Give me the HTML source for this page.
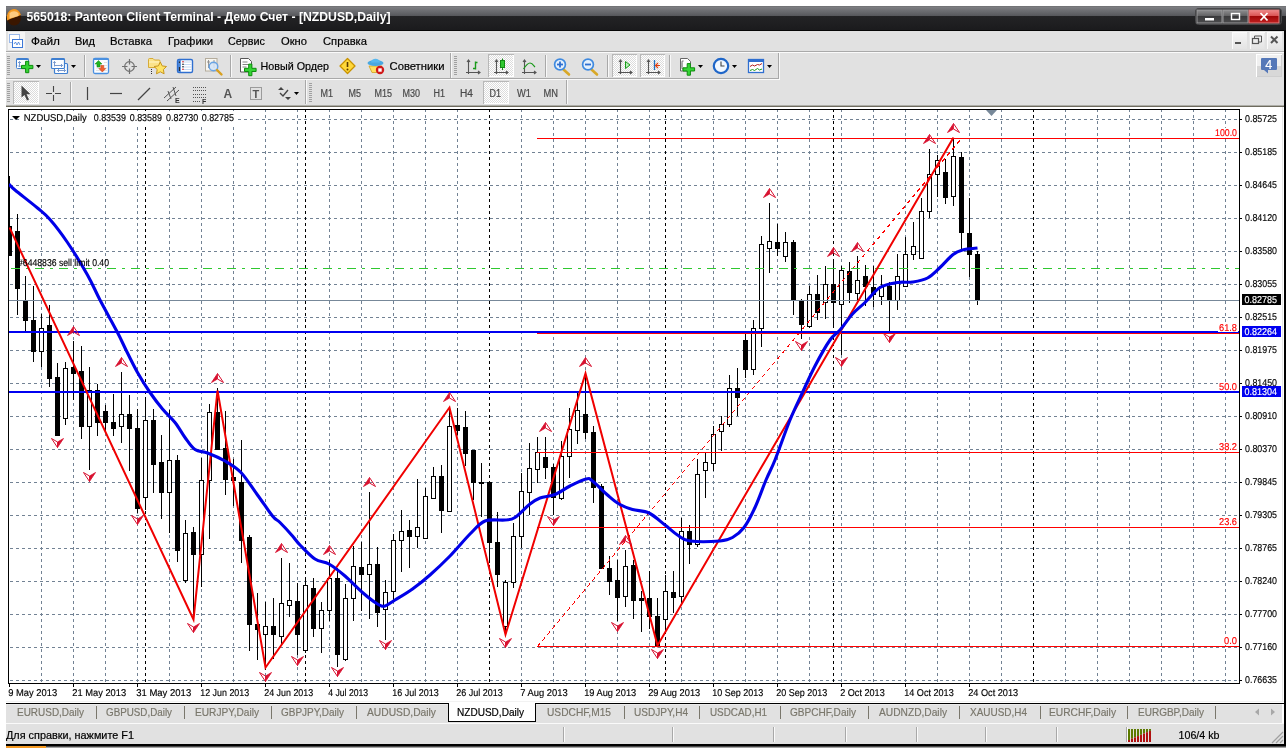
<!DOCTYPE html><html><head><meta charset="utf-8"><title>565018: Panteon Client Terminal</title>
<style>html,body{margin:0;padding:0;background:#fff;overflow:hidden}svg{display:block;will-change:transform}text{font-family:'Liberation Sans', sans-serif;white-space:pre}.g{text-rendering:geometricPrecision}</style></head><body>
<svg width="1288" height="748" viewBox="0 0 1288 748">
<rect width="1288" height="748" fill="#fff"/>
<defs>
<linearGradient id="tb" x1="0" y1="0" x2="0" y2="1"><stop offset="0" stop-color="#6c6d70"/><stop offset="0.05" stop-color="#7c7d81"/><stop offset="0.39" stop-color="#57585c"/><stop offset="0.41" stop-color="#232325"/><stop offset="0.95" stop-color="#1b1b1d"/><stop offset="0.96" stop-color="#050505"/><stop offset="1" stop-color="#050505"/></linearGradient>
<pattern id="chk" width="2" height="2" patternUnits="userSpaceOnUse"><rect width="2" height="2" fill="#fff"/><rect width="1" height="1" fill="#dcdcdc"/><rect x="1" y="1" width="1" height="1" fill="#dcdcdc"/></pattern>
<linearGradient id="cb" x1="0" y1="0" x2="0" y2="1"><stop offset="0" stop-color="#8e8e90"/><stop offset="0.48" stop-color="#5f5f61"/><stop offset="0.5" stop-color="#3a3a3c"/><stop offset="1" stop-color="#4c4c4e"/></linearGradient>
<linearGradient id="cr" x1="0" y1="0" x2="0" y2="1"><stop offset="0" stop-color="#f08a8a"/><stop offset="0.48" stop-color="#d85050"/><stop offset="0.5" stop-color="#a00808"/><stop offset="1" stop-color="#c02020"/></linearGradient>
<linearGradient id="mb" x1="0" y1="0" x2="0" y2="1"><stop offset="0" stop-color="#f6f6f6"/><stop offset="1" stop-color="#e4e4e4"/></linearGradient>
</defs>
<rect x="6" y="6" width="1280" height="740" fill="#000"/>
<rect x="6" y="31" width="1278" height="713" fill="#e1e1e1"/>
<rect x="6" y="6" width="1280" height="25" fill="url(#tb)"/>
<ellipse cx="14" cy="17.5" rx="7" ry="8" fill="#3a1600"/>
<path d="M7 18.5a7 7.5 0 0 1 14 -3.5c-4 1.500 -9 3 -14 5.500z" fill="#f59a23"/><path d="M9.500 13.500c2-3 7-3 9 0v2.500l-9 2.500z" fill="#ffd9a0" opacity=".75"/>
<text x="26.5" y="20.9" font-size="13.5" textLength="364" lengthAdjust="spacingAndGlyphs" fill="#fff" font-weight="bold">565018: Panteon Client Terminal - Демо Счет - [NZDUSD,Daily]</text>
<rect x="1195.5" y="8.5" width="86" height="16" rx="3" fill="#2a2a2c" stroke="#48484a"/>
<rect x="1197" y="10" width="25" height="13" fill="url(#cb)" stroke="#9a9a9c" stroke-width="1"/>
<rect x="1223" y="10" width="25" height="13" fill="url(#cb)" stroke="#9a9a9c" stroke-width="1"/>
<rect x="1249" y="10" width="30" height="13" fill="url(#cr)" stroke="#e08080" stroke-width="1"/>
<rect x="1205" y="18" width="9" height="2.5" fill="#fff"/>
<rect x="1231.5" y="13.5" width="8" height="6" fill="none" stroke="#fff" stroke-width="1.4"/>
<path d="M1260.5 13l7 7.5M1267.5 13l-7 7.5" stroke="#fff" stroke-width="1.8"/>
<rect x="8" y="32" width="17" height="18" fill="#f4f4f4"/>
<rect x="9.5" y="34.5" width="10" height="8" fill="#fff" stroke="#3c78d8" stroke-dasharray="1 1"/><rect x="12.5" y="39.5" width="10" height="8" fill="#fff" stroke="#3c78d8"/><path d="M14 44l1.5-2 1.5 3 1.5-3 1.5 3" stroke="#3c78d8" fill="none" stroke-width=".8"/>
<text x="31" y="45" font-size="11.5" textLength="29" lengthAdjust="spacingAndGlyphs" fill="#000" stroke="#000" stroke-width=".2">Файл</text>
<text x="75" y="45" font-size="11.5" textLength="20" lengthAdjust="spacingAndGlyphs" fill="#000" stroke="#000" stroke-width=".2">Вид</text>
<text x="110" y="45" font-size="11.5" textLength="42" lengthAdjust="spacingAndGlyphs" fill="#000" stroke="#000" stroke-width=".2">Вставка</text>
<text x="168" y="45" font-size="11.5" textLength="45" lengthAdjust="spacingAndGlyphs" fill="#000" stroke="#000" stroke-width=".2">Графики</text>
<text x="228" y="45" font-size="11.5" textLength="37" lengthAdjust="spacingAndGlyphs" fill="#000" stroke="#000" stroke-width=".2">Сервис</text>
<text x="281" y="45" font-size="11.5" textLength="26" lengthAdjust="spacingAndGlyphs" fill="#000" stroke="#000" stroke-width=".2">Окно</text>
<text x="323" y="45" font-size="11.5" textLength="44" lengthAdjust="spacingAndGlyphs" fill="#000" stroke="#000" stroke-width=".2">Справка</text>
<rect x="1232" y="32" width="15" height="17" fill="url(#mb)"/><path d="M1232.5 49V32.500H1247" stroke="#fbfbfb" fill="none" shape-rendering="crispEdges"/>
<rect x="1249.5" y="32" width="15" height="17" fill="url(#mb)"/><path d="M1250.0 49V32.500H1264.5" stroke="#fbfbfb" fill="none" shape-rendering="crispEdges"/>
<rect x="1267" y="32" width="15" height="17" fill="url(#mb)"/><path d="M1267.5 49V32.500H1282" stroke="#fbfbfb" fill="none" shape-rendering="crispEdges"/>
<rect x="1235" y="42" width="6" height="2" fill="#555"/>
<path d="M1254.5 38.5v-2.5h7v6h-2.5" stroke="#555" fill="none"/><rect x="1252.500" y="38.500" width="6" height="5" fill="none" stroke="#555" stroke-width="1.2"/>
<path d="M1271 36.500l6.500 6.500M1277.500 36.500l-6.500 6.500" stroke="#555" stroke-width="2"/>
<rect x="6" y="51" width="1278" height="1" fill="#a9a9a9"/><rect x="6" y="52" width="1278" height="1" fill="#fafafa"/>
<rect x="6" y="78" width="773" height="1" fill="#a9a9a9"/><rect x="6" y="79" width="774" height="1" fill="#fafafa"/>
<rect x="6" y="105" width="1278" height="1" fill="#aeaea8"/><rect x="6" y="106" width="1278" height="1" fill="#6e6b5e"/>
<path d="M7 56.5h3 M7 58.5h3 M7 60.5h3 M7 62.5h3 M7 64.5h3 M7 66.5h3 M7 68.5h3 M7 70.5h3 M7 72.5h3 M7 74.5h3" stroke="#a0a0a0" shape-rendering="crispEdges"/>
<path d="M7 83.5h3 M7 85.5h3 M7 87.5h3 M7 89.5h3 M7 91.5h3 M7 93.5h3 M7 95.5h3 M7 97.5h3 M7 99.5h3 M7 101.5h3" stroke="#a0a0a0" shape-rendering="crispEdges"/>
<path d="M454 56.5h3 M454 58.5h3 M454 60.5h3 M454 62.5h3 M454 64.5h3 M454 66.5h3 M454 68.5h3 M454 70.5h3 M454 72.5h3 M454 74.5h3" stroke="#a0a0a0" shape-rendering="crispEdges"/>
<path d="M309 83.5h3 M309 85.5h3 M309 87.5h3 M309 89.5h3 M309 91.5h3 M309 93.5h3 M309 95.5h3 M309 97.5h3 M309 99.5h3 M309 101.5h3" stroke="#a0a0a0" shape-rendering="crispEdges"/>
<path d="M84.5 55V77" stroke="#a8a8a8" shape-rendering="crispEdges"/><path d="M85.5 55V77" stroke="#f8f8f8" shape-rendering="crispEdges"/>
<path d="M230.5 55V77" stroke="#a8a8a8" shape-rendering="crispEdges"/><path d="M231.5 55V77" stroke="#f8f8f8" shape-rendering="crispEdges"/>
<path d="M450.5 53V78" stroke="#a8a8a8" shape-rendering="crispEdges"/><path d="M451.5 53V78" stroke="#f8f8f8" shape-rendering="crispEdges"/>
<path d="M545.5 55V77" stroke="#a8a8a8" shape-rendering="crispEdges"/><path d="M546.5 55V77" stroke="#f8f8f8" shape-rendering="crispEdges"/>
<path d="M607.5 55V77" stroke="#a8a8a8" shape-rendering="crispEdges"/><path d="M608.5 55V77" stroke="#f8f8f8" shape-rendering="crispEdges"/>
<path d="M669.5 55V77" stroke="#a8a8a8" shape-rendering="crispEdges"/><path d="M670.5 55V77" stroke="#f8f8f8" shape-rendering="crispEdges"/>
<path d="M778.5 53V79" stroke="#a8a8a8" shape-rendering="crispEdges"/><path d="M779.5 53V79" stroke="#f8f8f8" shape-rendering="crispEdges"/>
<path d="M70.5 82V103" stroke="#a8a8a8" shape-rendering="crispEdges"/><path d="M71.5 82V103" stroke="#f8f8f8" shape-rendering="crispEdges"/>
<path d="M305.5 80V104" stroke="#a8a8a8" shape-rendering="crispEdges"/><path d="M306.5 80V104" stroke="#f8f8f8" shape-rendering="crispEdges"/>
<path d="M566.5 80V104" stroke="#a8a8a8" shape-rendering="crispEdges"/><path d="M567.5 80V104" stroke="#f8f8f8" shape-rendering="crispEdges"/>
<rect x="16.500" y="58.500" width="12" height="10" rx="1" fill="#fbfdff" stroke="#3f7fd0"/><rect x="16.500" y="58.500" width="12" height="1.500" fill="#3f7fd0"/><path d="M19.500 61.500v5.500M18 63l1.500-1.500 1.500 1.500M18 65.500l1.500 1.500 1.500-1.500" stroke="#6b8fc8" fill="none" stroke-width=".9"/>
<path d="M25.599999999999998 61.3h3.2v4.1h4.1v3.2h-4.1v4.1h-3.2v-4.1h-4.1v-3.2h4.1z" fill="#35d435" stroke="#0c8c0c" stroke-width="1" stroke-linejoin="round"/>
<path d="M36 65h5l-2.5 3z" fill="#000"/>
<rect x="54.500" y="63.500" width="13" height="10" rx="1" fill="#fbfdff" stroke="#3f7fd0" stroke-width="1.200"/><path d="M57.500 70.500h8M59 69l-1.500 1.500 1.500 1.500M64 69l1.500 1.500-1.500 1.500" stroke="#6b8fc8" fill="none" stroke-width=".9"/>
<rect x="51.500" y="58.500" width="13" height="10" rx="1" fill="#fbfdff" stroke="#3f7fd0" stroke-width="1.200"/><rect x="51.500" y="58.500" width="13" height="1.500" fill="#3f7fd0"/><path d="M54.500 61.500v5M53.300 63l1.200-1.500 1.200 1.500M54.500 65.500h8M61 64l1.500 1.500-1.500 1.500" stroke="#6b8fc8" fill="none" stroke-width=".9"/>
<path d="M71 65h5l-2.5 3z" fill="#000"/>
<rect x="93.500" y="58.500" width="15" height="15" rx="1.500" fill="#fafcff" stroke="#4a90e0" stroke-width="1.300"/><rect x="93.500" y="58.500" width="15" height="1.500" fill="#4a90e0"/><path d="M96 65.500h11M96 68h11M96 70.500h11M104 62.500h3" stroke="#dcdcdc" stroke-width=".8"/>
<path d="M98.500 60.500l-3.500 3.500h2v3h3v-3h2z" fill="#22b422" stroke="#0e8a0e" stroke-width=".5"/><path d="M102.300 72l-3.500-3.500h2v-3h3v3h2z" fill="#f06030" stroke="#c83c10" stroke-width=".5"/>
<circle cx="129.500" cy="66.500" r="4.800" fill="none" stroke="#707070" stroke-width="1.200"/><path d="M129.500 59v5.500M129.500 68.500v5.500M122 66.500h5.500M131.500 66.500h5.500" stroke="#707070" stroke-width="1.200"/>
<path d="M148.500 67.500v-8a1 1 0 0 1 1-1h3.500l1.500 1.500h4.500a1 1 0 0 1 1 1v6.500z" fill="#fbe38a" stroke="#d2a52a" stroke-width=".9"/><path d="M149 62h10.500" stroke="#fff6c8" stroke-width="1"/>
<path d="M160.300 62l1.900 3.900 4.300.6-3.100 3 .7 4.300-3.800-2-3.800 2 .7-4.300-3.100-3 4.300-.6z" fill="#ffe466" stroke="#c8961e" stroke-width="1"/><path d="M151.500 69v6" stroke="#333" stroke-dasharray="1 1" shape-rendering="crispEdges"/>
<rect x="177.500" y="59.500" width="15" height="13" rx="1.500" fill="#fff" stroke="#2f6fd0" stroke-width="1.400"/><rect x="178" y="60" width="2.800" height="12" fill="#4a86d8"/><path d="M182 62h9.500M182 64.500h9.500M182 67h9.500M182 69.500h9.500" stroke="#b8cff0" stroke-width=".8"/><circle cx="183" cy="61.800" r=".8" fill="#e02020"/><circle cx="183" cy="64.300" r=".8" fill="#222"/><circle cx="183" cy="66.800" r=".8" fill="#222"/><circle cx="183" cy="69.300" r=".8" fill="#e02020"/><path d="M179.400 61.500v1.500M179.400 67v4" stroke="#222" stroke-width="1"/>
<rect x="205.500" y="58.500" width="11.500" height="12.500" fill="#f8f6f0" stroke="#b4ac9c"/><path d="M208.500 60v8M214 60v8M207 62h3M212.500 63.500h3" stroke="#8a8a8a" stroke-width=".9"/><circle cx="213.500" cy="66.500" r="4.300" fill="#d4e4f8" fill-opacity=".85" stroke="#6aa4e4" stroke-width="1.400"/><path d="M217 70l4.500 4.500" stroke="#d8a020" stroke-width="2.400" stroke-linecap="round"/>
<path d="M240.500 58.500h8l3 3v10.500h-11z" fill="#fff" stroke="#555" stroke-width="1"/><path d="M242.500 62h5M242.500 64.500h7M242.500 67h4" stroke="#777" stroke-width=".9"/>
<path d="M248.70000000000002 64.10000000000001h3.2v4.199999999999999h4.199999999999999v3.2h-4.199999999999999v4.199999999999999h-3.2v-4.199999999999999h-4.199999999999999v-3.2h4.199999999999999z" fill="#35d435" stroke="#0c8c0c" stroke-width="1" stroke-linejoin="round"/>
<path d="M347.500 58.500l7.500 7.500-7.500 7.500-7.500-7.500z" fill="#ffd83a" stroke="#c89200" stroke-width="1.300" stroke-linejoin="round"/><path d="M347.500 62v5" stroke="#5a3a00" stroke-width="1.600"/><circle cx="347.500" cy="69.500" r="1" fill="#5a3a00"/>
<path d="M369 66h13l-3 6.500h-7z" fill="#ffe060" stroke="#d0a020" stroke-width=".8"/><ellipse cx="375.500" cy="63" rx="8" ry="3" fill="#4aa8e0"/><path d="M371 62.500c0-5 9-5 9 0z" fill="#58b8ee"/><circle cx="380" cy="70" r="4.200" fill="#d01818"/><rect x="378.300" y="68.300" width="3.400" height="3.400" fill="#fff"/>
<path d="M468.500 60v14M466 72.500h14M467 62l1.500-2 1.500 2M478 71l2 1.500-2 1.500" stroke="#555" fill="none" stroke-width="1.100"/><path d="M475.500 61.500v8M475.500 62.500h2M473 68.500h2.500" stroke="#1a9a1a" fill="none" stroke-width="1.400"/>
<rect x="488" y="54" width="26" height="23" fill="url(#chk)"/>
<path d="M488.5 77V54.5H514" stroke="#b8b8b8" fill="none" shape-rendering="crispEdges"/><path d="M513.5 55V76.5H489" stroke="#fff" fill="none" shape-rendering="crispEdges"/>
<path d="M496.500 60v14M494 72.500h14M495 62l1.500-2 1.500 2M506 71l2 1.500-2 1.500" stroke="#555" fill="none" stroke-width="1.100"/><rect x="500.500" y="60.500" width="4" height="7" fill="#2fc82f" stroke="#128a12"/><path d="M502.500 58.500v2M502.500 67.500v2.500" stroke="#128a12"/>
<path d="M524.500 60v14M522 72.500h14M523 62l1.500-2 1.500 2M534 71l2 1.500-2 1.500" stroke="#555" fill="none" stroke-width="1.100"/><path d="M523.500 69c2-3 4-6 6.500-6s4 3 5 4" stroke="#1a9a1a" fill="none" stroke-width="1.200"/>
<path d="M563.5 69.5l5.500 5" stroke="#d8a828" stroke-width="2.600" stroke-linecap="round"/><circle cx="560" cy="64.500" r="5.400" fill="#e4f0fc" stroke="#3f8ae0" stroke-width="1.700"/>
<path d="M557 64.500h6" stroke="#2f6fd0" stroke-width="1.800"/>
<path d="M560 61.500v6" stroke="#2f6fd0" stroke-width="1.800"/>
<path d="M591.5 69.5l5.500 5" stroke="#d8a828" stroke-width="2.600" stroke-linecap="round"/><circle cx="588" cy="64.500" r="5.400" fill="#e4f0fc" stroke="#3f8ae0" stroke-width="1.700"/>
<path d="M585 64.500h6" stroke="#2f6fd0" stroke-width="1.800"/>
<rect x="612" y="54" width="25" height="23" fill="url(#chk)"/>
<path d="M612.5 77V54.5H637" stroke="#b8b8b8" fill="none" shape-rendering="crispEdges"/><path d="M636.5 55V76.5H613" stroke="#fff" fill="none" shape-rendering="crispEdges"/>
<rect x="640" y="54" width="25" height="23" fill="url(#chk)"/>
<path d="M640.5 77V54.5H665" stroke="#b8b8b8" fill="none" shape-rendering="crispEdges"/><path d="M664.5 55V76.5H641" stroke="#fff" fill="none" shape-rendering="crispEdges"/>
<path d="M620.500 60v14M618 72.500h14M619 62l1.500-2 1.500 2M630 71l2 1.500-2 1.500" stroke="#555" fill="none" stroke-width="1.100"/><path d="M625.500 61.500l4.500 3.500-4.500 3.500z" fill="#b8f0b8" stroke="#1a9a1a" stroke-width="1"/>
<path d="M648.500 60v14M646 72.500h14M647 62l1.500-2 1.500 2M658 71l2 1.500-2 1.500" stroke="#555" fill="none" stroke-width="1.100"/><path d="M654.500 60v10" stroke="#2070c0" stroke-width="1.300"/><path d="M660 65.500h-4M658 63l-2.500 2.500 2.500 2.500" stroke="#e04010" fill="none" stroke-width="1.200"/>
<path d="M680.500 58.500h7l3 3v9.500h-10z" fill="#fff" stroke="#666"/><path d="M683.500 61c-1.500 0-1.500 0-1.500 1.500v5c0 1.500 0 1.500 1.500 1.500" stroke="#444" fill="none" stroke-width=".9"/>
<path d="M687.1999999999999 63.60000000000001h3.2v4.199999999999999h4.199999999999999v3.2h-4.199999999999999v4.199999999999999h-3.2v-4.199999999999999h-4.199999999999999v-3.2h4.199999999999999z" fill="#35d435" stroke="#0c8c0c" stroke-width="1" stroke-linejoin="round"/>
<path d="M698 65h5l-2.5 3z" fill="#000"/>
<circle cx="721" cy="66" r="7.200" fill="#f2f8ff" stroke="#1f66c8" stroke-width="2.200"/><path d="M721 61.500v4.500h3.500" stroke="#444" fill="none" stroke-width="1.100"/>
<path d="M732 65h5l-2.5 3z" fill="#000"/>
<rect x="748.500" y="59.500" width="15" height="13" fill="#fff" stroke="#2f6fd0" stroke-width="1.300"/><rect x="748.500" y="59.500" width="15" height="2.500" fill="#2f6fd0"/><path d="M750 66.500l2.500-1.500 2 1 3-1.500 2 .5 2.500-1.500" stroke="#b02020" fill="none"/><path d="M750 70.500l2.500-1 2 1 3-2 2 1.500 2.500-1" stroke="#1a9a1a" fill="none"/>
<path d="M767 65h5l-2.5 3z" fill="#000"/>
<rect x="1256" y="54" width="26" height="23" fill="#f0f0f0"/><rect x="1256" y="66" width="26" height="11" fill="#d8d8d8"/><path d="M1256.500 77V54.500H1282" stroke="#fff" fill="none" shape-rendering="crispEdges"/><path d="M1281.500 55V76.500H1257" stroke="#cfcfcf" fill="none" shape-rendering="crispEdges"/>
<path d="M1262 58h14a1 1 0 0 1 1 1v10a1 1 0 0 1 -1 1h-8v3.500l-4-3.500h-2a1 1 0 0 1 -1-1v-10a1 1 0 0 1 1-1z" fill="#5578b8"/>
<text x="1265.3" y="68.7" font-size="12.5" fill="#fff" stroke="#fff" stroke-width=".2">4</text>
<rect x="13" y="81" width="26" height="23" fill="url(#chk)"/>
<path d="M13.5 104V81.5H39" stroke="#b8b8b8" fill="none" shape-rendering="crispEdges"/><path d="M38.5 82V103.5H14" stroke="#fff" fill="none" shape-rendering="crispEdges"/>
<path d="M21.500 85.500v12l3-2.500 2.500 5.500 2-1-2.500-5.200h4z" fill="#444"/>
<path d="M53.500 86v6M53.500 95v6M46 93.500h6M55 93.500h6" stroke="#444" stroke-width="1.100"/>
<path d="M87.500 87v13" stroke="#444" stroke-width="1.200"/><path d="M110 93.500h12" stroke="#444" stroke-width="1.200"/><path d="M138 100l12-12" stroke="#444" stroke-width="1.200"/>
<path d="M164 98l12-11M167 101l12-11M168 91l3 8M173 87l3 9" stroke="#555" stroke-width="1"/>
<text x="175" y="103" font-size="7" fill="#333" font-weight="bold">E</text>
<path d="M193 87.500h13M193 90.500h13M193 94.500h13M193 97.500h13M193 101.500h8" stroke="#555" stroke-dasharray="1 1"/>
<text x="202" y="104" font-size="7" fill="#333" font-weight="bold">F</text>
<text x="223.5" y="98" font-size="12" fill="#555" font-weight="bold">A</text>
<rect x="250.500" y="87.500" width="11" height="12" fill="none" stroke="#555" stroke-dasharray="1 1"/>
<text x="252.5" y="98" font-size="11" fill="#555" font-weight="bold">T</text>
<path d="M281 87l3 3h-6zM288 100l-3-3h6z" fill="#444"/><path d="M280 93l3 3 5-6" stroke="#444" fill="none" stroke-width="1.400"/>
<path d="M294 92h5l-2.5 3z" fill="#000"/>
<text x="260.5" y="70" font-size="11.5" textLength="68.5" lengthAdjust="spacingAndGlyphs" fill="#000" stroke="#000" stroke-width=".2">Новый Ордер</text>
<text x="389.5" y="70" font-size="11.5" textLength="55" lengthAdjust="spacingAndGlyphs" fill="#000" stroke="#000" stroke-width=".2">Советники</text>
<text x="320.5" y="97" font-size="10" textLength="12.5" lengthAdjust="spacingAndGlyphs" fill="#4a4a4a" stroke="#4a4a4a" stroke-width=".2">M1</text>
<text x="348.5" y="97" font-size="10" textLength="12.5" lengthAdjust="spacingAndGlyphs" fill="#4a4a4a" stroke="#4a4a4a" stroke-width=".2">M5</text>
<text x="374.5" y="97" font-size="10" textLength="17.5" lengthAdjust="spacingAndGlyphs" fill="#4a4a4a" stroke="#4a4a4a" stroke-width=".2">M15</text>
<text x="402.5" y="97" font-size="10" textLength="17.5" lengthAdjust="spacingAndGlyphs" fill="#4a4a4a" stroke="#4a4a4a" stroke-width=".2">M30</text>
<text x="433.5" y="97" font-size="10" textLength="11.5" lengthAdjust="spacingAndGlyphs" fill="#4a4a4a" stroke="#4a4a4a" stroke-width=".2">H1</text>
<text x="460" y="97" font-size="10" textLength="13" lengthAdjust="spacingAndGlyphs" fill="#4a4a4a" stroke="#4a4a4a" stroke-width=".2">H4</text>
<text x="517" y="97" font-size="10" textLength="14" lengthAdjust="spacingAndGlyphs" fill="#4a4a4a" stroke="#4a4a4a" stroke-width=".2">W1</text>
<text x="543.5" y="97" font-size="10" textLength="14.5" lengthAdjust="spacingAndGlyphs" fill="#4a4a4a" stroke="#4a4a4a" stroke-width=".2">MN</text>
<rect x="483" y="81" width="26" height="23" fill="url(#chk)"/>
<path d="M483.5 104V81.5H509" stroke="#b8b8b8" fill="none" shape-rendering="crispEdges"/><path d="M508.5 82V103.5H484" stroke="#fff" fill="none" shape-rendering="crispEdges"/>
<text x="489.5" y="97" font-size="10" textLength="11.5" lengthAdjust="spacingAndGlyphs" fill="#4a4a4a" stroke="#4a4a4a" stroke-width=".2">D1</text>
<g id="chart">
<rect x="0" y="107" width="1284" height="596" fill="#fff"/>
<clipPath id="cc"><rect x="9" y="110" width="1230" height="573"/></clipPath>
<g clip-path="url(#cc)" shape-rendering="crispEdges">
<path d="M9 119.5H1239 M9 152.5H1239 M9 185.5H1239 M9 218.5H1239 M9 251.5H1239 M9 284.5H1239 M9 317.5H1239 M9 350.5H1239 M9 383.5H1239 M9 416.5H1239 M9 449.5H1239 M9 482.5H1239 M9 515.5H1239 M9 548.5H1239 M9 581.5H1239 M9 614.5H1239 M9 647.5H1239 M9 680.5H1239" stroke="#728294" stroke-width="1" stroke-dasharray="3 3" stroke-dashoffset="5" fill="none"/>
<path d="M41.5 110V683 M73.5 110V683 M105.5 110V683 M137.5 110V683 M169.5 110V683 M201.5 110V683 M233.5 110V683 M265.5 110V683 M297.5 110V683 M329.5 110V683 M361.5 110V683 M393.5 110V683 M425.5 110V683 M457.5 110V683 M489.5 110V683 M521.5 110V683 M553.5 110V683 M585.5 110V683 M617.5 110V683 M649.5 110V683 M681.5 110V683 M713.5 110V683 M745.5 110V683 M777.5 110V683 M809.5 110V683 M841.5 110V683 M873.5 110V683 M905.5 110V683 M937.5 110V683 M969.5 110V683 M1001.5 110V683 M1033.5 110V683 M1065.5 110V683 M1097.5 110V683 M1129.5 110V683 M1161.5 110V683 M1193.5 110V683 M1225.5 110V683" stroke="#728294" stroke-width="1" stroke-dasharray="3 3" stroke-dashoffset="1" fill="none"/>
<path d="M145.5 110V683 M305.5 110V683 M489.5 110V683 M665.5 110V683 M833.5 110V683 M1033.5 110V683" stroke="#000" stroke-width="1" stroke-dasharray="3 3" stroke-dashoffset="1" fill="none"/>
<path d="M9.5 176V256 M17.5 214V315 M25.5 276V331 M33.5 286V362 M41.5 314V367 M49.5 305V387 M57.5 363V436 M65.5 362V425 M73.5 341V400 M81.5 346V439 M89.5 367V470 M97.5 384V436 M105.5 405V432 M113.5 394V436 M121.5 372V443 M129.5 395V471 M137.5 409V513 M145.5 398V510 M153.5 409V493 M161.5 435V519 M169.5 410V533 M177.5 455V562 M185.5 520V583 M193.5 527V620 M201.5 458V587 M209.5 404V539 M217.5 388V450 M225.5 411V495 M233.5 459V506 M241.5 440V563 M249.5 535V651 M257.5 593V660 M265.5 602V670 M273.5 598V659 M281.5 558V646 M289.5 563V617 M297.5 583V655 M305.5 578V653 M313.5 578V637 M321.5 602V653 M329.5 560V621 M337.5 568V667 M345.5 584V661 M353.5 546V621 M361.5 542V611 M369.5 492V619 M377.5 547V627 M385.5 580V640 M393.5 534V601 M401.5 510V572 M409.5 520V568 M417.5 479V548 M425.5 488V539 M433.5 467V499 M441.5 465V533 M449.5 408V512 M457.5 408V435 M465.5 411V466 M473.5 450V500 M481.5 463V517 M489.5 482V563 M497.5 512V587 M505.5 580V636 M513.5 523V588 M521.5 473V548 M529.5 443V515 M537.5 437V483 M545.5 437V479 M553.5 464V515 M561.5 441V500 M569.5 408V478 M577.5 392V444 M585.5 372V439 M593.5 426V503 M601.5 484V569 M609.5 556V595 M617.5 560V621 M625.5 550V607 M633.5 560V619 M641.5 591V632 M649.5 571V629 M657.5 598V646 M665.5 575V631 M673.5 571V613 M681.5 518V603 M689.5 525V564 M697.5 459V547 M705.5 452V498 M713.5 426V471 M721.5 416V451 M729.5 375V427 M737.5 368V416 M745.5 334V378 M753.5 320V375 M761.5 236V347 M769.5 203V273 M777.5 224V256 M785.5 232V262 M793.5 240V315 M801.5 299V339 M809.5 286V328 M817.5 275V320 M825.5 266V319 M833.5 259V325 M841.5 266V355 M849.5 262V303 M857.5 256V301 M865.5 265V306 M873.5 266V307 M881.5 275V305 M889.5 282V331 M897.5 254V310 M905.5 237V287 M913.5 222V260 M921.5 198V259 M929.5 149V218 M937.5 155V197 M945.5 159V204 M953.5 138V206 M961.5 152V250 M969.5 198V277 M977.5 251V305" stroke="#000" stroke-width="1" fill="none"/>
<path d="M7 226h5V256h-5z M15 231h5V289h-5z M23 300h5V321h-5z M31 320h5V352h-5z M47 325h5V379h-5z M55 377h5V436h-5z M71 367h5V374h-5z M79 371h5V427h-5z M95 390h5V423h-5z M103 411h5V423h-5z M111 422h5V429h-5z M127 414h5V429h-5z M135 428h5V509h-5z M151 420h5V465h-5z M159 462h5V493h-5z M175 460h5V551h-5z M191 532h5V555h-5z M215 412h5V450h-5z M223 448h5V480h-5z M231 477h5V481h-5z M239 482h5V541h-5z M247 537h5V625h-5z M255 624h5V630h-5z M271 626h5V635h-5z M295 601h5V635h-5z M311 588h5V629h-5z M335 578h5V655h-5z M359 567h5V575h-5z M375 564h5V613h-5z M407 530h5V537h-5z M439 476h5V511h-5z M455 425h5V431h-5z M463 427h5V454h-5z M471 450h5V483h-5z M479 482h5V484h-5z M487 482h5V543h-5z M495 542h5V575h-5z M543 457h5V468h-5z M551 467h5V498h-5z M583 414h5V433h-5z M591 432h5V488h-5z M599 486h5V569h-5z M607 568h5V582h-5z M615 580h5V598h-5z M631 565h5V601h-5z M639 598h5V601h-5z M647 598h5V617h-5z M655 616h5V646h-5z M671 592h5V598h-5z M687 531h5V545h-5z M735 388h5V398h-5z M743 340h5V370h-5z M775 242h5V249h-5z M791 242h5V301h-5z M799 300h5V325h-5z M815 294h5V313h-5z M831 284h5V303h-5z M847 271h5V293h-5z M863 276h5V287h-5z M871 287h5V295h-5z M887 286h5V301h-5z M943 172h5V198h-5z M959 157h5V233h-5z M967 233h5V255h-5z M975 254h5V301h-5z" fill="#000"/>
<path d="M39.5 328.5h4V351.5h-4z M63.5 368.5h4V418.5h-4z M87.5 390.5h4V426.5h-4z M119.5 414.5h4V426.5h-4z M143.5 420.5h4V497.5h-4z M167.5 460.5h4V492.5h-4z M183.5 533.5h4V580.5h-4z M199.5 480.5h4V554.5h-4z M207.5 412.5h4V480.5h-4z M263.5 626.5h4V634.5h-4z M279.5 603.5h4V636.5h-4z M287.5 600.5h4V605.5h-4z M303.5 585.5h4V650.5h-4z M319.5 610.5h4V628.5h-4z M327.5 578.5h4V610.5h-4z M343.5 598.5h4V659.5h-4z M351.5 566.5h4V598.5h-4z M367.5 564.5h4V574.5h-4z M383.5 592.5h4V609.5h-4z M391.5 540.5h4V591.5h-4z M399.5 531.5h4V540.5h-4z M415.5 527.5h4V536.5h-4z M423.5 496.5h4V538.5h-4z M431.5 476.5h4V498.5h-4z M447.5 426.5h4V511.5h-4z M503.5 582.5h4V626.5h-4z M511.5 536.5h4V582.5h-4z M519.5 491.5h4V536.5h-4z M527.5 468.5h4V492.5h-4z M535.5 452.5h4V469.5h-4z M559.5 456.5h4V498.5h-4z M567.5 429.5h4V456.5h-4z M575.5 410.5h4V430.5h-4z M623.5 566.5h4V596.5h-4z M663.5 591.5h4V619.5h-4z M679.5 531.5h4V596.5h-4z M695.5 474.5h4V544.5h-4z M703.5 462.5h4V470.5h-4z M711.5 434.5h4V463.5h-4z M719.5 424.5h4V431.5h-4z M727.5 388.5h4V424.5h-4z M751.5 328.5h4V369.5h-4z M759.5 244.5h4V328.5h-4z M767.5 241.5h4V248.5h-4z M783.5 242.5h4V256.5h-4z M807.5 294.5h4V326.5h-4z M823.5 284.5h4V302.5h-4z M839.5 270.5h4V304.5h-4z M855.5 280.5h4V293.5h-4z M879.5 286.5h4V296.5h-4z M895.5 276.5h4V300.5h-4z M903.5 254.5h4V286.5h-4z M911.5 246.5h4V254.5h-4z M919.5 211.5h4V258.5h-4z M927.5 174.5h4V211.5h-4z M935.5 160.5h4V174.5h-4z M951.5 156.5h4V196.5h-4z" fill="#fff" stroke="#000" stroke-width="1"/>
<rect x="537" y="138" width="702" height="1" fill="#f00"/>
<rect x="537" y="333" width="702" height="1" fill="#f00"/>
<rect x="537" y="392" width="702" height="1" fill="#f00"/>
<rect x="537" y="452" width="702" height="1" fill="#f00"/>
<rect x="537" y="527" width="702" height="1" fill="#f00"/>
<rect x="537" y="646" width="702" height="1" fill="#f00"/>
</g>
<g clip-path="url(#cc)">
<path d="M537.5 646.5L961.5 138.5" stroke="#f00" stroke-width="1" stroke-dasharray="3.9 3.9" fill="none" shape-rendering="crispEdges"/>
<path d="M9 268.5H1239" stroke="#2fc82f" stroke-width="1" stroke-dasharray="9 6 3 6" stroke-dashoffset="-2" fill="none" shape-rendering="crispEdges"/>
<rect x="9" y="300" width="1230" height="1" fill="#778899"/>
<rect x="9" y="331" width="1230" height="2" fill="#0000f0" shape-rendering="crispEdges"/>
<rect x="9" y="391" width="1230" height="2" fill="#0000f0" shape-rendering="crispEdges"/>
<polyline points="9.5,227.5 193.5,619.5 217.5,390.5 265.5,667.5 449.5,407.5 505.5,634.5 585.5,373.5 657.5,645.5 953.5,137.5" stroke="#f00000" stroke-width="2" fill="none" stroke-linejoin="miter"/>
<path d="M9 184C10.0 185.0 10.2 186.0 15 190C19.8 194.0 31.7 203.1 37.5 208C43.3 212.9 45.0 213.8 50 219.5C55.0 225.2 61.2 233.2 67.5 242.5C73.8 251.8 82.1 265.4 87.5 275C92.9 284.6 95.0 290.4 100 300C105.0 309.6 113.2 324.2 117.5 332.5C121.8 340.8 122.7 343.3 126 350C129.3 356.7 133.5 365.4 137.5 372.5C141.5 379.6 145.8 386.4 150 392.5C154.2 398.6 158.3 404.0 162.5 409C166.7 414.0 171.2 417.8 175 422.5C178.8 427.2 181.7 433.0 185 437.5C188.3 442.0 191.2 446.9 195 449.5C198.8 452.1 202.5 451.1 207.5 453C212.5 454.9 219.4 457.8 225 461C230.6 464.2 235.6 466.8 241 472.5C246.4 478.2 252.2 487.8 257.5 495C262.8 502.2 268.8 511.4 272.5 516C276.2 520.6 276.7 519.2 280 522.5C283.3 525.8 289.2 532.2 292.5 536C295.8 539.8 296.2 541.2 300 545C303.8 548.8 310.2 555.8 315 559C319.8 562.2 324.0 561.2 329 564C334.0 566.8 339.4 571.2 345 576C350.6 580.8 357.1 587.8 362.5 592.5C367.9 597.2 373.8 601.8 377.5 604C381.2 606.2 382.1 606.7 385 606C387.9 605.3 390.4 602.8 395 600C399.6 597.2 406.7 593.2 412.5 589C418.3 584.8 423.8 580.5 430 575C436.2 569.5 443.3 562.8 450 556C456.7 549.2 464.2 539.8 470 534C475.8 528.2 479.2 523.3 485 521C490.8 518.7 500.0 520.6 505 520C510.0 519.4 510.8 520.2 515 517.5C519.2 514.8 525.8 507.2 530 504C534.2 500.8 535.8 499.6 540 498C544.2 496.4 550.0 496.5 555 494.5C560.0 492.5 564.8 488.6 570 486C575.2 483.4 582.2 479.8 586 479C589.8 478.2 588.9 478.3 592.5 481C596.1 483.7 603.1 491.2 607.5 495C611.9 498.8 614.8 501.6 619 504C623.2 506.4 627.5 508.0 632.5 509.5C637.5 511.0 643.6 510.4 649 513C654.4 515.6 660.2 521.3 665 525C669.8 528.7 673.3 532.3 677.5 535C681.7 537.7 682.9 540.0 690 541C697.1 542.0 712.9 541.6 720 541C727.1 540.4 728.5 539.8 732.5 537.5C736.5 535.2 740.2 532.5 744 527.5C747.8 522.5 751.3 515.4 755 507.5C758.7 499.6 762.7 487.9 766 480C769.3 472.1 771.0 470.0 775 460C779.0 450.0 785.4 431.2 790 420C794.6 408.8 798.3 401.5 802.5 392.5C806.7 383.5 810.4 374.8 815 366C819.6 357.2 825.8 346.0 830 340C834.2 334.0 836.2 334.3 840 330C843.8 325.7 848.3 318.6 852.5 314C856.7 309.4 860.4 306.9 865 302.5C869.6 298.1 874.6 290.8 880 287.5C885.4 284.2 892.1 283.4 897.5 282.5C902.9 281.6 907.5 282.8 912.5 282C917.5 281.2 922.9 280.4 927.5 278C932.1 275.6 935.8 271.3 940 267.5C944.2 263.7 948.8 257.9 952.5 255C956.2 252.1 958.3 251.2 962.5 250C966.7 248.8 975.0 248.3 977.5 248" stroke="#0000e8" stroke-width="3.1" fill="none" stroke-linejoin="round" stroke-linecap="butt"/>
<path d="M73.5 326.5L67.5 335.5L73.5 332Z" fill="#d8102f" stroke="#d8102f" stroke-width=".8"/><path d="M73.5 326.5L79.5 335.5L73.5 332" fill="none" stroke="#d8102f" stroke-width="1"/>
<path d="M121.5 357.5L115.5 366.5L121.5 363Z" fill="#d8102f" stroke="#d8102f" stroke-width=".8"/><path d="M121.5 357.5L127.5 366.5L121.5 363" fill="none" stroke="#d8102f" stroke-width="1"/>
<path d="M217.5 373.5L211.5 382.5L217.5 379Z" fill="#d8102f" stroke="#d8102f" stroke-width=".8"/><path d="M217.5 373.5L223.5 382.5L217.5 379" fill="none" stroke="#d8102f" stroke-width="1"/>
<path d="M281.5 543.5L275.5 552.5L281.5 549Z" fill="#d8102f" stroke="#d8102f" stroke-width=".8"/><path d="M281.5 543.5L287.5 552.5L281.5 549" fill="none" stroke="#d8102f" stroke-width="1"/>
<path d="M329.5 545.5L323.5 554.5L329.5 551Z" fill="#d8102f" stroke="#d8102f" stroke-width=".8"/><path d="M329.5 545.5L335.5 554.5L329.5 551" fill="none" stroke="#d8102f" stroke-width="1"/>
<path d="M369.5 477.5L363.5 486.5L369.5 483Z" fill="#d8102f" stroke="#d8102f" stroke-width=".8"/><path d="M369.5 477.5L375.5 486.5L369.5 483" fill="none" stroke="#d8102f" stroke-width="1"/>
<path d="M449.5 392.5L443.5 401.5L449.5 398Z" fill="#d8102f" stroke="#d8102f" stroke-width=".8"/><path d="M449.5 392.5L455.5 401.5L449.5 398" fill="none" stroke="#d8102f" stroke-width="1"/>
<path d="M545.5 422.5L539.5 431.5L545.5 428Z" fill="#d8102f" stroke="#d8102f" stroke-width=".8"/><path d="M545.5 422.5L551.5 431.5L545.5 428" fill="none" stroke="#d8102f" stroke-width="1"/>
<path d="M585.5 357.5L579.5 366.5L585.5 363Z" fill="#d8102f" stroke="#d8102f" stroke-width=".8"/><path d="M585.5 357.5L591.5 366.5L585.5 363" fill="none" stroke="#d8102f" stroke-width="1"/>
<path d="M625.5 535.5L619.5 544.5L625.5 541Z" fill="#d8102f" stroke="#d8102f" stroke-width=".8"/><path d="M625.5 535.5L631.5 544.5L625.5 541" fill="none" stroke="#d8102f" stroke-width="1"/>
<path d="M769.5 188.5L763.5 197.5L769.5 194Z" fill="#d8102f" stroke="#d8102f" stroke-width=".8"/><path d="M769.5 188.5L775.5 197.5L769.5 194" fill="none" stroke="#d8102f" stroke-width="1"/>
<path d="M833.5 247.5L827.5 256.5L833.5 253Z" fill="#d8102f" stroke="#d8102f" stroke-width=".8"/><path d="M833.5 247.5L839.5 256.5L833.5 253" fill="none" stroke="#d8102f" stroke-width="1"/>
<path d="M857.5 242.5L851.5 251.5L857.5 248Z" fill="#d8102f" stroke="#d8102f" stroke-width=".8"/><path d="M857.5 242.5L863.5 251.5L857.5 248" fill="none" stroke="#d8102f" stroke-width="1"/>
<path d="M929.5 134.5L923.5 143.5L929.5 140Z" fill="#d8102f" stroke="#d8102f" stroke-width=".8"/><path d="M929.5 134.5L935.5 143.5L929.5 140" fill="none" stroke="#d8102f" stroke-width="1"/>
<path d="M953.5 123.5L947.5 132.5L953.5 129Z" fill="#d8102f" stroke="#d8102f" stroke-width=".8"/><path d="M953.5 123.5L959.5 132.5L953.5 129" fill="none" stroke="#d8102f" stroke-width="1"/>
<path d="M57.5 447.5L51.5 438.5L57.5 442Z" fill="none" stroke="#d8102f" stroke-width="1"/><path d="M57.5 447.5L63.5 438.5L57.5 442Z" fill="#d8102f" stroke="#d8102f" stroke-width=".8"/>
<path d="M89.5 481.5L83.5 472.5L89.5 476Z" fill="none" stroke="#d8102f" stroke-width="1"/><path d="M89.5 481.5L95.5 472.5L89.5 476Z" fill="#d8102f" stroke="#d8102f" stroke-width=".8"/>
<path d="M137.5 524.5L131.5 515.5L137.5 519Z" fill="none" stroke="#d8102f" stroke-width="1"/><path d="M137.5 524.5L143.5 515.5L137.5 519Z" fill="#d8102f" stroke="#d8102f" stroke-width=".8"/>
<path d="M193.5 632.5L187.5 623.5L193.5 627Z" fill="none" stroke="#d8102f" stroke-width="1"/><path d="M193.5 632.5L199.5 623.5L193.5 627Z" fill="#d8102f" stroke="#d8102f" stroke-width=".8"/>
<path d="M265.5 681.5L259.5 672.5L265.5 676Z" fill="none" stroke="#d8102f" stroke-width="1"/><path d="M265.5 681.5L271.5 672.5L265.5 676Z" fill="#d8102f" stroke="#d8102f" stroke-width=".8"/>
<path d="M297.5 665.5L291.5 656.5L297.5 660Z" fill="none" stroke="#d8102f" stroke-width="1"/><path d="M297.5 665.5L303.5 656.5L297.5 660Z" fill="#d8102f" stroke="#d8102f" stroke-width=".8"/>
<path d="M337.5 676.5L331.5 667.5L337.5 671Z" fill="none" stroke="#d8102f" stroke-width="1"/><path d="M337.5 676.5L343.5 667.5L337.5 671Z" fill="#d8102f" stroke="#d8102f" stroke-width=".8"/>
<path d="M385.5 649.5L379.5 640.5L385.5 644Z" fill="none" stroke="#d8102f" stroke-width="1"/><path d="M385.5 649.5L391.5 640.5L385.5 644Z" fill="#d8102f" stroke="#d8102f" stroke-width=".8"/>
<path d="M505.5 647.5L499.5 638.5L505.5 642Z" fill="none" stroke="#d8102f" stroke-width="1"/><path d="M505.5 647.5L511.5 638.5L505.5 642Z" fill="#d8102f" stroke="#d8102f" stroke-width=".8"/>
<path d="M553.5 525.5L547.5 516.5L553.5 520Z" fill="none" stroke="#d8102f" stroke-width="1"/><path d="M553.5 525.5L559.5 516.5L553.5 520Z" fill="#d8102f" stroke="#d8102f" stroke-width=".8"/>
<path d="M617.5 631.5L611.5 622.5L617.5 626Z" fill="none" stroke="#d8102f" stroke-width="1"/><path d="M617.5 631.5L623.5 622.5L617.5 626Z" fill="#d8102f" stroke="#d8102f" stroke-width=".8"/>
<path d="M657.5 658.5L651.5 649.5L657.5 653Z" fill="none" stroke="#d8102f" stroke-width="1"/><path d="M657.5 658.5L663.5 649.5L657.5 653Z" fill="#d8102f" stroke="#d8102f" stroke-width=".8"/>
<path d="M801.5 350.5L795.5 341.5L801.5 345Z" fill="none" stroke="#d8102f" stroke-width="1"/><path d="M801.5 350.5L807.5 341.5L801.5 345Z" fill="#d8102f" stroke="#d8102f" stroke-width=".8"/>
<path d="M841.5 366.5L835.5 357.5L841.5 361Z" fill="none" stroke="#d8102f" stroke-width="1"/><path d="M841.5 366.5L847.5 357.5L841.5 361Z" fill="#d8102f" stroke="#d8102f" stroke-width=".8"/>
<path d="M889.5 342.5L883.5 333.5L889.5 337Z" fill="none" stroke="#d8102f" stroke-width="1"/><path d="M889.5 342.5L895.5 333.5L889.5 337Z" fill="#d8102f" stroke="#d8102f" stroke-width=".8"/>
</g>
<path d="M986 110h11l-5.5 6z" fill="#778899"/>
<path d="M8.5 109V684M8 109.5H1240M1239.5 109V684M8 683.5H1240" stroke="#000" stroke-width="1" fill="none" shape-rendering="crispEdges"/>
<text class="g" x="1245" y="122" font-size="9.9" textLength="32" lengthAdjust="spacingAndGlyphs" fill="#000" stroke="#000" stroke-width=".15">0.85725</text>
<text class="g" x="1245" y="155" font-size="9.9" textLength="32" lengthAdjust="spacingAndGlyphs" fill="#000" stroke="#000" stroke-width=".15">0.85185</text>
<text class="g" x="1245" y="188" font-size="9.9" textLength="32" lengthAdjust="spacingAndGlyphs" fill="#000" stroke="#000" stroke-width=".15">0.84645</text>
<text class="g" x="1245" y="221" font-size="9.9" textLength="32" lengthAdjust="spacingAndGlyphs" fill="#000" stroke="#000" stroke-width=".15">0.84120</text>
<text class="g" x="1245" y="254" font-size="9.9" textLength="32" lengthAdjust="spacingAndGlyphs" fill="#000" stroke="#000" stroke-width=".15">0.83580</text>
<text class="g" x="1245" y="287" font-size="9.9" textLength="32" lengthAdjust="spacingAndGlyphs" fill="#000" stroke="#000" stroke-width=".15">0.83055</text>
<text class="g" x="1245" y="320" font-size="9.9" textLength="32" lengthAdjust="spacingAndGlyphs" fill="#000" stroke="#000" stroke-width=".15">0.82515</text>
<text class="g" x="1245" y="353" font-size="9.9" textLength="32" lengthAdjust="spacingAndGlyphs" fill="#000" stroke="#000" stroke-width=".15">0.81975</text>
<text class="g" x="1245" y="386" font-size="9.9" textLength="32" lengthAdjust="spacingAndGlyphs" fill="#000" stroke="#000" stroke-width=".15">0.81450</text>
<text class="g" x="1245" y="419" font-size="9.9" textLength="32" lengthAdjust="spacingAndGlyphs" fill="#000" stroke="#000" stroke-width=".15">0.80910</text>
<text class="g" x="1245" y="452" font-size="9.9" textLength="32" lengthAdjust="spacingAndGlyphs" fill="#000" stroke="#000" stroke-width=".15">0.80370</text>
<text class="g" x="1245" y="485" font-size="9.9" textLength="32" lengthAdjust="spacingAndGlyphs" fill="#000" stroke="#000" stroke-width=".15">0.79845</text>
<text class="g" x="1245" y="518" font-size="9.9" textLength="32" lengthAdjust="spacingAndGlyphs" fill="#000" stroke="#000" stroke-width=".15">0.79305</text>
<text class="g" x="1245" y="551" font-size="9.9" textLength="32" lengthAdjust="spacingAndGlyphs" fill="#000" stroke="#000" stroke-width=".15">0.78765</text>
<text class="g" x="1245" y="584" font-size="9.9" textLength="32" lengthAdjust="spacingAndGlyphs" fill="#000" stroke="#000" stroke-width=".15">0.78240</text>
<text class="g" x="1245" y="617" font-size="9.9" textLength="32" lengthAdjust="spacingAndGlyphs" fill="#000" stroke="#000" stroke-width=".15">0.77700</text>
<text class="g" x="1245" y="650" font-size="9.9" textLength="32" lengthAdjust="spacingAndGlyphs" fill="#000" stroke="#000" stroke-width=".15">0.77160</text>
<text class="g" x="1245" y="683" font-size="9.9" textLength="32" lengthAdjust="spacingAndGlyphs" fill="#000" stroke="#000" stroke-width=".15">0.76635</text>
<path d="M1240 119.5h2 M1240 152.5h2 M1240 185.5h2 M1240 218.5h2 M1240 251.5h2 M1240 284.5h2 M1240 317.5h2 M1240 350.5h2 M1240 383.5h2 M1240 416.5h2 M1240 449.5h2 M1240 482.5h2 M1240 515.5h2 M1240 548.5h2 M1240 581.5h2 M1240 614.5h2 M1240 647.5h2 M1240 680.5h2" stroke="#000" shape-rendering="crispEdges"/>
<rect x="1242" y="294" width="39" height="11" fill="#000" shape-rendering="crispEdges"/>
<text class="g" x="1244.5" y="303" font-size="9.9" textLength="32.5" lengthAdjust="spacingAndGlyphs" fill="#fff" stroke="#fff" stroke-width=".15">0.82785</text>
<rect x="1242" y="326" width="39" height="11" fill="#0000f0" shape-rendering="crispEdges"/>
<text class="g" x="1244.5" y="335" font-size="9.9" textLength="32.5" lengthAdjust="spacingAndGlyphs" fill="#fff" stroke="#fff" stroke-width=".15">0.82264</text>
<rect x="1242" y="386" width="39" height="11" fill="#0000f0" shape-rendering="crispEdges"/>
<text class="g" x="1244.5" y="395" font-size="9.9" textLength="32.5" lengthAdjust="spacingAndGlyphs" fill="#fff" stroke="#fff" stroke-width=".15">0.81304</text>
<rect x="1214" y="128" width="24" height="9" fill="#fff"/>
<text class="g" x="1215" y="136" font-size="9.9" textLength="22" lengthAdjust="spacingAndGlyphs" fill="#f00" stroke="#f00" stroke-width=".15">100.0</text>
<rect x="1218" y="323" width="20" height="9" fill="#fff"/>
<text class="g" x="1219" y="331" font-size="9.9" textLength="18" lengthAdjust="spacingAndGlyphs" fill="#f00" stroke="#f00" stroke-width=".15">61.8</text>
<rect x="1218" y="382" width="20" height="9" fill="#fff"/>
<text class="g" x="1219" y="390" font-size="9.9" textLength="18" lengthAdjust="spacingAndGlyphs" fill="#f00" stroke="#f00" stroke-width=".15">50.0</text>
<rect x="1218" y="442" width="20" height="9" fill="#fff"/>
<text class="g" x="1219" y="450" font-size="9.9" textLength="18" lengthAdjust="spacingAndGlyphs" fill="#f00" stroke="#f00" stroke-width=".15">38.2</text>
<rect x="1218" y="517" width="20" height="9" fill="#fff"/>
<text class="g" x="1219" y="525" font-size="9.9" textLength="18" lengthAdjust="spacingAndGlyphs" fill="#f00" stroke="#f00" stroke-width=".15">23.6</text>
<rect x="1223" y="636" width="15" height="9" fill="#fff"/>
<text class="g" x="1224" y="644" font-size="9.9" textLength="13" lengthAdjust="spacingAndGlyphs" fill="#f00" stroke="#f00" stroke-width=".15">0.0</text>
<text class="g" x="8.2" y="696" font-size="9.9" textLength="49" lengthAdjust="spacingAndGlyphs" fill="#000" stroke="#000" stroke-width=".15">9 May 2013</text>
<text class="g" x="72.2" y="696" font-size="9.9" textLength="54" lengthAdjust="spacingAndGlyphs" fill="#000" stroke="#000" stroke-width=".15">21 May 2013</text>
<text class="g" x="136.2" y="696" font-size="9.9" textLength="55" lengthAdjust="spacingAndGlyphs" fill="#000" stroke="#000" stroke-width=".15">31 May 2013</text>
<text class="g" x="200.2" y="696" font-size="9.9" textLength="49" lengthAdjust="spacingAndGlyphs" fill="#000" stroke="#000" stroke-width=".15">12 Jun 2013</text>
<text class="g" x="264.2" y="696" font-size="9.9" textLength="49" lengthAdjust="spacingAndGlyphs" fill="#000" stroke="#000" stroke-width=".15">24 Jun 2013</text>
<text class="g" x="328.2" y="696" font-size="9.9" textLength="40" lengthAdjust="spacingAndGlyphs" fill="#000" stroke="#000" stroke-width=".15">4 Jul 2013</text>
<text class="g" x="392.2" y="696" font-size="9.9" textLength="46.5" lengthAdjust="spacingAndGlyphs" fill="#000" stroke="#000" stroke-width=".15">16 Jul 2013</text>
<text class="g" x="456.2" y="696" font-size="9.9" textLength="46.5" lengthAdjust="spacingAndGlyphs" fill="#000" stroke="#000" stroke-width=".15">26 Jul 2013</text>
<text class="g" x="520.2" y="696" font-size="9.9" textLength="47.5" lengthAdjust="spacingAndGlyphs" fill="#000" stroke="#000" stroke-width=".15">7 Aug 2013</text>
<text class="g" x="584.2" y="696" font-size="9.9" textLength="52" lengthAdjust="spacingAndGlyphs" fill="#000" stroke="#000" stroke-width=".15">19 Aug 2013</text>
<text class="g" x="648.2" y="696" font-size="9.9" textLength="52" lengthAdjust="spacingAndGlyphs" fill="#000" stroke="#000" stroke-width=".15">29 Aug 2013</text>
<text class="g" x="712.2" y="696" font-size="9.9" textLength="51" lengthAdjust="spacingAndGlyphs" fill="#000" stroke="#000" stroke-width=".15">10 Sep 2013</text>
<text class="g" x="776.2" y="696" font-size="9.9" textLength="51" lengthAdjust="spacingAndGlyphs" fill="#000" stroke="#000" stroke-width=".15">20 Sep 2013</text>
<text class="g" x="840.2" y="696" font-size="9.9" textLength="44.5" lengthAdjust="spacingAndGlyphs" fill="#000" stroke="#000" stroke-width=".15">2 Oct 2013</text>
<text class="g" x="904.2" y="696" font-size="9.9" textLength="49.5" lengthAdjust="spacingAndGlyphs" fill="#000" stroke="#000" stroke-width=".15">14 Oct 2013</text>
<text class="g" x="968.2" y="696" font-size="9.9" textLength="50" lengthAdjust="spacingAndGlyphs" fill="#000" stroke="#000" stroke-width=".15">24 Oct 2013</text>
<path d="M9.5 684v3 M73.5 684v3 M137.5 684v3 M201.5 684v3 M265.5 684v3 M329.5 684v3 M393.5 684v3 M457.5 684v3 M521.5 684v3 M585.5 684v3 M649.5 684v3 M713.5 684v3 M777.5 684v3 M841.5 684v3 M905.5 684v3 M969.5 684v3" stroke="#000" shape-rendering="crispEdges"/>
<path d="M12 116h8l-4 4z" fill="#000"/>
<rect x="22" y="111" width="214" height="14" fill="#fff"/>
<text class="g" x="23.8" y="121" font-size="9.9" textLength="63" lengthAdjust="spacingAndGlyphs" fill="#000" stroke="#000" stroke-width=".15">NZDUSD,Daily</text>
<text class="g" x="93.7" y="121" font-size="9.9" textLength="32.3" lengthAdjust="spacingAndGlyphs" fill="#000" stroke="#000" stroke-width=".15">0.83539</text>
<text class="g" x="129.7" y="121" font-size="9.9" textLength="32.3" lengthAdjust="spacingAndGlyphs" fill="#000" stroke="#000" stroke-width=".15">0.83589</text>
<text class="g" x="166" y="121" font-size="9.9" textLength="32.3" lengthAdjust="spacingAndGlyphs" fill="#000" stroke="#000" stroke-width=".15">0.82730</text>
<text class="g" x="201.7" y="121" font-size="9.9" textLength="32.3" lengthAdjust="spacingAndGlyphs" fill="#000" stroke="#000" stroke-width=".15">0.82785</text>
<text class="g" x="18" y="266" font-size="9.9" textLength="91" lengthAdjust="spacingAndGlyphs" fill="#000" stroke="#000" stroke-width=".15">#6448836 sell limit 0.40</text>
</g>
<rect x="1282" y="107" width="1" height="594" fill="#e6e6e6"/>
<rect x="6" y="701" width="1278" height="1" fill="#f2f2f2"/><rect x="6" y="703" width="1278" height="1" fill="#000"/>
<rect x="6" y="704" width="1278" height="20" fill="#e1e1e1"/><rect x="6" y="704" width="1278" height="1" fill="#ebebeb"/>
<rect x="6" y="723" width="1278" height="1" fill="#fafafa"/><rect x="1282" y="704" width="2" height="19" fill="#fff"/>
<path d="M448.500 703V721.500H535.500V703" fill="#fff" stroke="#000" shape-rendering="crispEdges"/><rect x="449" y="702" width="86" height="3" fill="#fff"/>
<text x="17" y="716" font-size="11.5" textLength="67" lengthAdjust="spacingAndGlyphs" fill="#7a776c" stroke="#7a776c" stroke-width=".2">EURUSD,Daily</text>
<text x="106" y="716" font-size="11.5" textLength="66" lengthAdjust="spacingAndGlyphs" fill="#7a776c" stroke="#7a776c" stroke-width=".2">GBPUSD,Daily</text>
<text x="195" y="716" font-size="11.5" textLength="64" lengthAdjust="spacingAndGlyphs" fill="#7a776c" stroke="#7a776c" stroke-width=".2">EURJPY,Daily</text>
<text x="281" y="716" font-size="11.5" textLength="63" lengthAdjust="spacingAndGlyphs" fill="#7a776c" stroke="#7a776c" stroke-width=".2">GBPJPY,Daily</text>
<text x="367" y="716" font-size="11.5" textLength="69" lengthAdjust="spacingAndGlyphs" fill="#7a776c" stroke="#7a776c" stroke-width=".2">AUDUSD,Daily</text>
<text x="457" y="716" font-size="11.5" textLength="67" lengthAdjust="spacingAndGlyphs" fill="#000" stroke="#000" stroke-width=".2">NZDUSD,Daily</text>
<text x="547" y="716" font-size="11.5" textLength="64" lengthAdjust="spacingAndGlyphs" fill="#7a776c" stroke="#7a776c" stroke-width=".2">USDCHF,M15</text>
<text x="634" y="716" font-size="11.5" textLength="54" lengthAdjust="spacingAndGlyphs" fill="#7a776c" stroke="#7a776c" stroke-width=".2">USDJPY,H4</text>
<text x="710" y="716" font-size="11.5" textLength="57" lengthAdjust="spacingAndGlyphs" fill="#7a776c" stroke="#7a776c" stroke-width=".2">USDCAD,H1</text>
<text x="790" y="716" font-size="11.5" textLength="66" lengthAdjust="spacingAndGlyphs" fill="#7a776c" stroke="#7a776c" stroke-width=".2">GBPCHF,Daily</text>
<text x="879" y="716" font-size="11.5" textLength="68" lengthAdjust="spacingAndGlyphs" fill="#7a776c" stroke="#7a776c" stroke-width=".2">AUDNZD,Daily</text>
<text x="970" y="716" font-size="11.5" textLength="57" lengthAdjust="spacingAndGlyphs" fill="#7a776c" stroke="#7a776c" stroke-width=".2">XAUUSD,H4</text>
<text x="1049" y="716" font-size="11.5" textLength="67" lengthAdjust="spacingAndGlyphs" fill="#7a776c" stroke="#7a776c" stroke-width=".2">EURCHF,Daily</text>
<text x="1138" y="716" font-size="11.5" textLength="66" lengthAdjust="spacingAndGlyphs" fill="#7a776c" stroke="#7a776c" stroke-width=".2">EURGBP,Daily</text>
<path d="M96.5 706V719 M184.5 706V719 M271.5 706V719 M356.5 706V719 M624.5 706V719 M699.5 706V719 M780.5 706V719 M868.5 706V719 M959.5 706V719 M1040.5 706V719 M1127.5 706V719 M1215.5 706V719" stroke="#7a776c" shape-rendering="crispEdges"/>
<path d="M1259 708.500v7l-4-3.500zM1271 708.500v7l4-3.500z" fill="#a8a8a8"/>
<text x="6" y="739" font-size="11.5" textLength="128" lengthAdjust="spacingAndGlyphs" fill="#000" stroke="#000" stroke-width=".2">Для справки, нажмите F1</text>
<path d="M563.5 727V742" stroke="#a8a8a8" shape-rendering="crispEdges"/><path d="M564.5 727V742" stroke="#fafafa" shape-rendering="crispEdges"/>
<path d="M672.5 727V742" stroke="#a8a8a8" shape-rendering="crispEdges"/><path d="M673.5 727V742" stroke="#fafafa" shape-rendering="crispEdges"/>
<path d="M773.5 727V742" stroke="#a8a8a8" shape-rendering="crispEdges"/><path d="M774.5 727V742" stroke="#fafafa" shape-rendering="crispEdges"/>
<path d="M845.5 727V742" stroke="#a8a8a8" shape-rendering="crispEdges"/><path d="M846.5 727V742" stroke="#fafafa" shape-rendering="crispEdges"/>
<path d="M916.5 727V742" stroke="#a8a8a8" shape-rendering="crispEdges"/><path d="M917.5 727V742" stroke="#fafafa" shape-rendering="crispEdges"/>
<path d="M985.5 727V742" stroke="#a8a8a8" shape-rendering="crispEdges"/><path d="M986.5 727V742" stroke="#fafafa" shape-rendering="crispEdges"/>
<path d="M1056.5 727V742" stroke="#a8a8a8" shape-rendering="crispEdges"/><path d="M1057.5 727V742" stroke="#fafafa" shape-rendering="crispEdges"/>
<path d="M1126.5 727V742" stroke="#a8a8a8" shape-rendering="crispEdges"/><path d="M1127.5 727V742" stroke="#fafafa" shape-rendering="crispEdges"/>
<rect x="1128" y="729" width="2" height="11.0" fill="#5c7a00"/><rect x="1128" y="740.0" width="2" height="2.0" fill="#b01010"/>
<rect x="1131" y="729" width="2" height="9.7" fill="#5c7a00"/><rect x="1131" y="738.7" width="2" height="3.3" fill="#b01010"/>
<rect x="1134" y="729" width="2" height="8.4" fill="#5c7a00"/><rect x="1134" y="737.4" width="2" height="4.6" fill="#b01010"/>
<rect x="1137" y="729" width="2" height="7.1" fill="#5c7a00"/><rect x="1137" y="736.1" width="2" height="5.9" fill="#b01010"/>
<rect x="1140" y="729" width="2" height="5.8" fill="#5c7a00"/><rect x="1140" y="734.8" width="2" height="7.2" fill="#b01010"/>
<rect x="1143" y="729" width="2" height="4.5" fill="#5c7a00"/><rect x="1143" y="733.5" width="2" height="8.5" fill="#b01010"/>
<rect x="1146" y="729" width="2" height="3.1999999999999993" fill="#5c7a00"/><rect x="1146" y="732.2" width="2" height="9.8" fill="#b01010"/>
<rect x="1149" y="729" width="2" height="1.9000000000000004" fill="#5c7a00"/><rect x="1149" y="730.9" width="2" height="11.1" fill="#b01010"/>
<text x="1178.5" y="739" font-size="11.5" textLength="41" lengthAdjust="spacingAndGlyphs" fill="#000" stroke="#000" stroke-width=".2">106/4 kb</text>
<path d="M1280 743L1283 740 M1276 743L1283 736 M1272 743L1283 732" stroke="#a0a0a0" stroke-width="1.200"/>
<rect x="6" y="746" width="1280" height="1" fill="#4a4a4a"/><rect x="6" y="747" width="1280" height="1" fill="#a4a4a4"/>
<rect x="6" y="746" width="40" height="2" fill="#f59a23"/>
</svg></body></html>
